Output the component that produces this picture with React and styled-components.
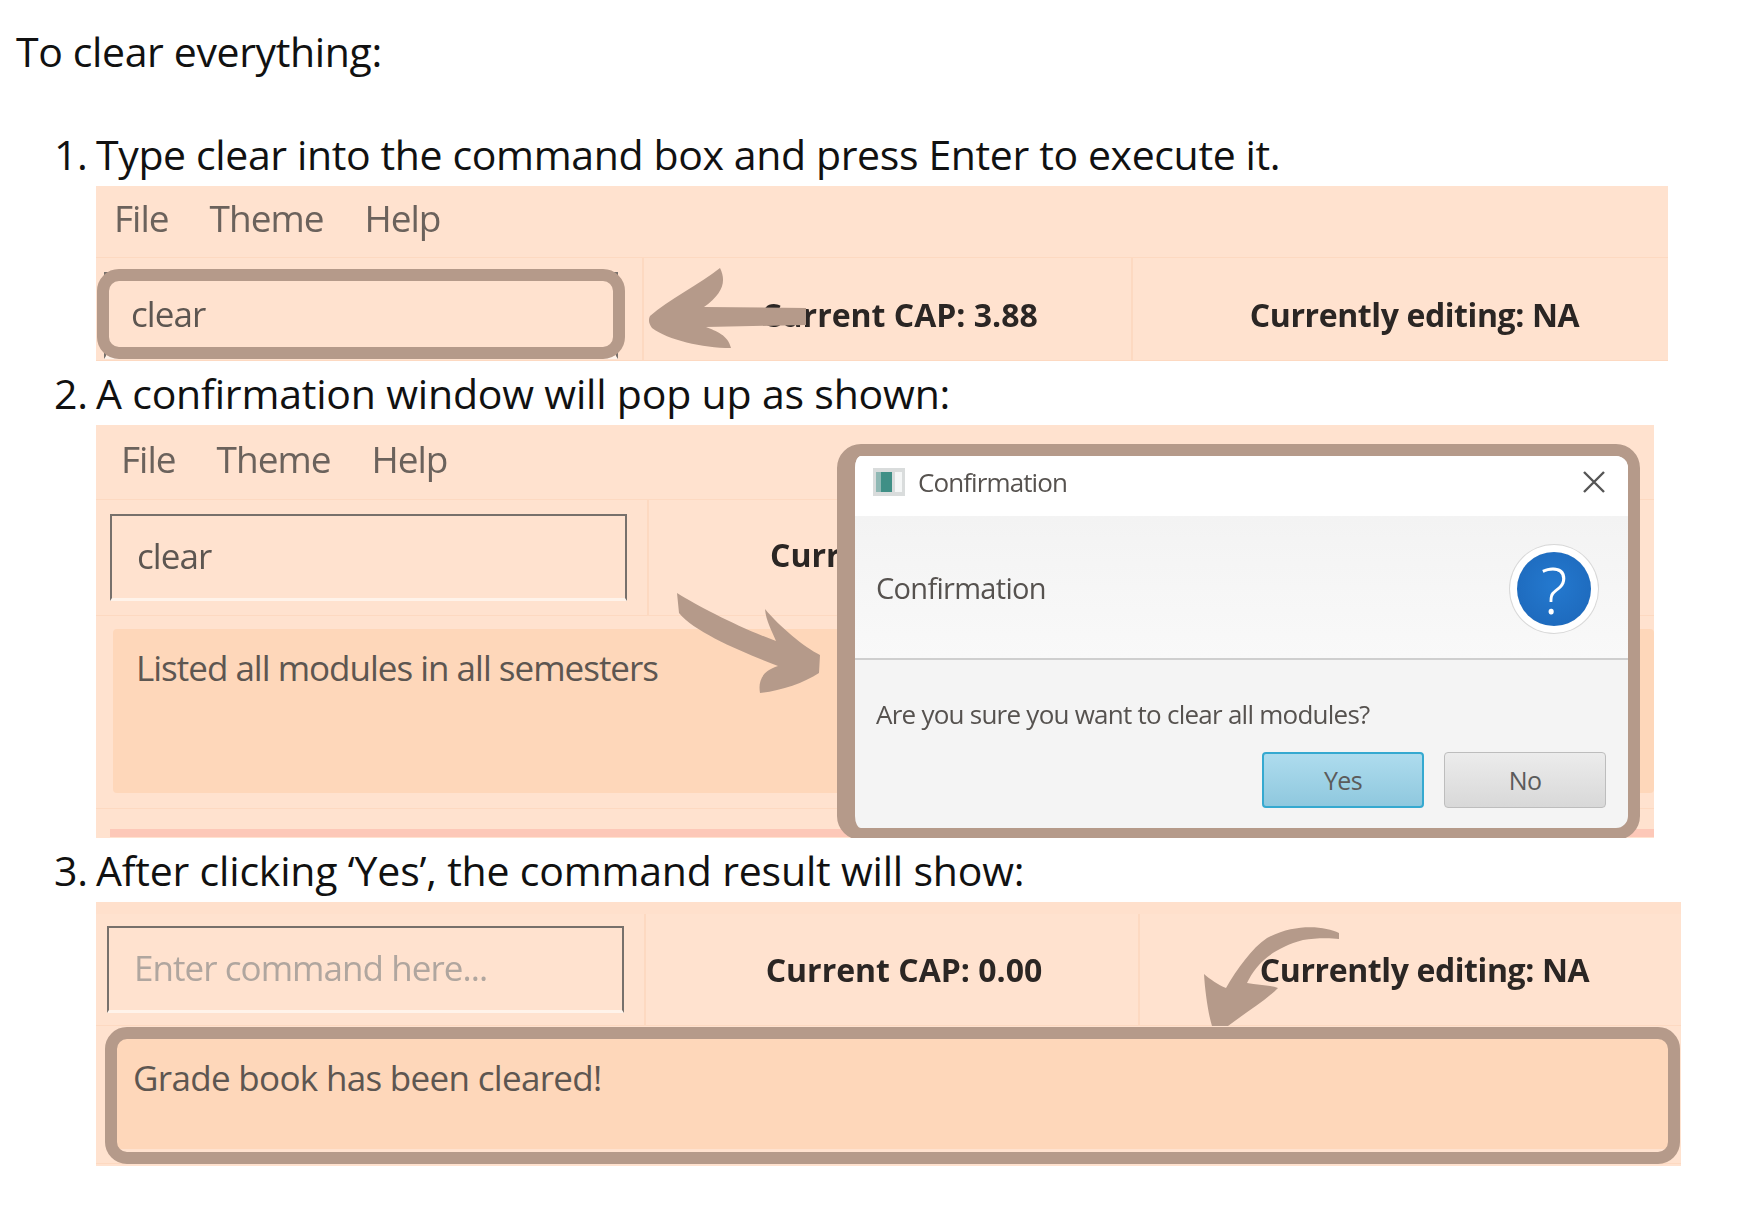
import styled, { createGlobalStyle } from "styled-components";

const GlobalStyle = createGlobalStyle`
  html, body {
    margin: 0;
    padding: 0;
    background: #fff;
  }
  #root {
    width: 1743px;
    height: 1205px;
    overflow: hidden;
  }
`;

const RING = "#b59a8a";

export default function App() {
  return (
    <Page>
      <GlobalStyle />
      <Heading>To clear everything:</Heading>
      <Steps>
        <Step>
          <StepLine>
            <Marker>1.</Marker>Type clear into the command box and press Enter to execute it.
          </StepLine>
          <Shot $width={1572} $height={175}>
            <Menu />
            <Toolbar $columns="548px 489px 1fr" $height={103}>
              <CommandCell $left={8} $top={14}>
                <CommandBox $width={514}>clear</CommandBox>
              </CommandCell>
              <CapCell $above={10}>Current CAP: 3.88</CapCell>
              <EditingCell $above={10}>Currently editing: NA</EditingCell>
            </Toolbar>
            <Ring $left={1} $top={83} $width={528} $height={90} />
            <ArrowLeft />
          </Shot>
        </Step>
        <Step>
          <StepLine $tracking={-0.19}>
            <Marker>2.</Marker>A confirmation window will pop up as shown:
          </StepLine>
          <Shot $width={1558} $height={413}>
            <Menu $left={25} $height={75} $lift={7} />
            <Toolbar $columns="553px 489px 1fr" $height={116}>
              <CommandCell $left={14} $top={14}>
                <CommandBox $width={517}>clear</CommandBox>
              </CommandCell>
              <CapCell $below={6} $start={121}>
                Curr
              </CapCell>
              <EditingCell />
            </Toolbar>
            <ResultArea $pad="13px 0 15px 17px">
              <ResultBox $height={164}>Listed all modules in all semesters</ResultBox>
            </ResultArea>
            <ListBand />
            <ArrowCurve />
            <Dialog>
              <TitleBar>
                <WindowIcon />
                <TitleText>Confirmation</TitleText>
                <CloseIcon />
              </TitleBar>
              <DialogHeader>
                <HeaderText>Confirmation</HeaderText>
                <HelpBadge>?</HelpBadge>
              </DialogHeader>
              <DialogBody>
                <Message>Are you sure you want to clear all modules?</Message>
                <ButtonRow>
                  <DialogButton $primary>Yes</DialogButton>
                  <DialogButton>No</DialogButton>
                </ButtonRow>
              </DialogBody>
            </Dialog>
          </Shot>
        </Step>
        <Step>
          <StepLine $tracking={-0.19}>
            <Marker>3.</Marker>After clicking ‘Yes’, the command result will show:
          </StepLine>
          <Shot $width={1585} $height={264}>
            <TopStrip />
            <Toolbar $columns="550px 494px 1fr" $height={112}>
              <CommandCell $left={11} $top={12}>
                <CommandBox $width={517} $placeholder>
                  Enter command here...
                </CommandBox>
              </CommandCell>
              <CapCell>Current CAP: 0.00</CapCell>
              <EditingCell>Currently editing: NA</EditingCell>
            </Toolbar>
            <ResultArea $pad="13px 12px 14px 20px">
              <ResultBox $height={110} $indent={17} $tracking={-0.68}>
                Grade book has been cleared!
              </ResultBox>
            </ResultArea>
            <Ring $left={9} $top={125} $width={1575} $height={137} />
            <ArrowDown />
          </Shot>
        </Step>
      </Steps>
    </Page>
  );
}

function Menu({ $left = 18, $height = 72, $lift = 9 }) {
  return (
    <MenuBar $left={$left} $height={$height} $lift={$lift}>
      <span>File</span>
      <span>Theme</span>
      <span>Help</span>
    </MenuBar>
  );
}

function ArrowLeft() {
  return (
    <Drawing $left={549} $top={76} width="165" height="92" viewBox="645 262 165 92">
      <path
        fill={RING}
        d="M650 316 C668 300 700 284 720 268 C727 282 722 294 704 307 L806 308 L806 325 L706 327 C716 331 728 335 731 348 C702 348 668 340 652 328 C649 324 648 320 650 316 Z"
      />
    </Drawing>
  );
}

function ArrowCurve() {
  return (
    <Drawing $left={574} $top={161} width="155" height="112" viewBox="670 585 155 112">
      <path
        fill={RING}
        d="M677 592 C700 606 738 626 776 640 C772 630 766 620 765 608 C780 626 804 646 820 654 L819 672 C804 682 780 690 760 692 C758 680 762 670 778 665 C745 652 695 632 679 612 Z"
      />
    </Drawing>
  );
}

function ArrowDown() {
  return (
    <Drawing $left={1104} $top={20} width="145" height="105" viewBox="1200 921 145 105">
      <path
        fill={RING}
        d="M1339 932 C1325 925 1295 922 1267 937 C1252 947 1237 968 1226 987 C1218 984 1210 978 1204 973 C1205 990 1208 1012 1212 1025 L1228 1025 C1245 1012 1265 1000 1278 987 C1270 984 1258 984 1247 982 C1255 965 1270 948 1303 939 C1315 937 1330 937 1339 938 Z"
      />
    </Drawing>
  );
}

function WindowIcon() {
  return (
    <svg width="32" height="28" viewBox="0 0 32 28">
      <rect x="0" y="0" width="32" height="28" fill="#d9dcdc" />
      <rect x="3" y="4" width="16" height="20" fill="#3f8f86" />
      <rect x="3" y="4" width="5" height="20" fill="#8fb8b4" />
      <rect x="22" y="4" width="7" height="20" fill="#f4f6f6" />
    </svg>
  );
}

function CloseIcon() {
  return (
    <CloseSvg width="24" height="24" viewBox="0 0 24 24">
      <path d="M2 2 L22 22 M22 2 L2 22" stroke="#555" strokeWidth="2.4" fill="none" />
    </CloseSvg>
  );
}

const Page = styled.div`
  width: 1743px;
  height: 1205px;
  padding-top: 19px;
  box-sizing: border-box;
  background: #fff;
  color: #111;
  font-family: "Open Sans", sans-serif;
`;

const Heading = styled.div`
  margin-left: 16px;
  height: 64px;
  font-size: 41px;
  line-height: 64px;
  letter-spacing: -0.37px;
`;

const Steps = styled.div`
  margin-top: 39px;
  display: flex;
  flex-direction: column;
`;

const Step = styled.div`
  display: flex;
  flex-direction: column;
`;

const StepLine = styled.div`
  height: 64px;
  padding-left: 54px;
  display: flex;
  font-size: 41px;
  line-height: 64px;
  letter-spacing: ${(p) => p.$tracking || -0.37}px;
  white-space: pre;
`;

const Marker = styled.span`
  width: 42px;
`;

const Shot = styled.div`
  position: relative;
  overflow: hidden;
  margin-left: 96px;
  width: ${(p) => p.$width}px;
  height: ${(p) => p.$height}px;
  background: #ffe2cf;
  font-family: "Open Sans", sans-serif;
`;

const MenuBar = styled.div`
  height: ${(p) => p.$height}px;
  padding: 0 0 ${(p) => p.$lift}px ${(p) => p.$left}px;
  box-sizing: border-box;
  border-bottom: 1px solid #fdd9c1;
  display: flex;
  align-items: center;
  gap: 41px;
  font-size: 37px;
  letter-spacing: -1px;
  color: #6b625c;
  filter: blur(0.7px);
`;

const TopStrip = styled.div`
  height: 12px;
  background: #ffe0cc;
`;

const Toolbar = styled.div`
  height: ${(p) => p.$height}px;
  display: grid;
  grid-template-columns: ${(p) => p.$columns};
  border-bottom: 1px solid #fdd9c1;
  box-sizing: border-box;
`;

const CommandCell = styled.div`
  padding: ${(p) => p.$top}px 0 0 ${(p) => p.$left}px;
  border-right: 2px solid #fdd9c1;
`;

const CommandBox = styled.div`
  width: ${(p) => p.$width}px;
  height: 87px;
  box-sizing: border-box;
  padding: 0 0 4px 25px;
  display: flex;
  align-items: center;
  border: 2px solid #77706b;
  border-bottom: 3px solid #fff3ea;
  font-size: 35px;
  letter-spacing: -0.95px;
  color: ${(p) => (p.$placeholder ? "#b0a69f" : "#5d5651")};
  filter: blur(0.6px);
`;

const CapCell = styled.div`
  padding: ${(p) => p.$above || 0}px 0 ${(p) => p.$below || 0}px ${(p) => p.$start || 24}px;
  display: flex;
  align-items: center;
  justify-content: ${(p) => (p.$start ? "flex-start" : "center")};
  border-right: 2px solid #fdd9c1;
  font-size: 32px;
  font-weight: 700;
  color: #2b2624;
  filter: blur(0.5px);
`;

const EditingCell = styled(CapCell)`
  padding-left: 28px;
  border-right: 0;
  letter-spacing: -0.4px;
`;

const ResultArea = styled.div`
  padding: ${(p) => p.$pad};
  border-bottom: 1px solid #fdd9c1;
`;

const ResultBox = styled.div`
  height: ${(p) => p.$height}px;
  box-sizing: border-box;
  padding: 15px 0 0 ${(p) => p.$indent || 23}px;
  background: #fed7ba;
  border-radius: 4px;
  font-size: 35px;
  line-height: 48px;
  letter-spacing: ${(p) => p.$tracking || -1}px;
  color: #5d5651;
`;

const ListBand = styled.div`
  height: 8px;
  margin: 20px 0 0 14px;
  background: #fdc8b8;
`;

const Ring = styled.div`
  position: absolute;
  left: ${(p) => p.$left}px;
  top: ${(p) => p.$top}px;
  width: ${(p) => p.$width}px;
  height: ${(p) => p.$height}px;
  box-sizing: border-box;
  border: 12px solid ${RING};
  border-radius: 22px;
`;

const Drawing = styled.svg`
  position: absolute;
  left: ${(p) => p.$left}px;
  top: ${(p) => p.$top}px;
`;

const Dialog = styled.div`
  position: absolute;
  left: 741px;
  top: 19px;
  width: 803px;
  height: 396px;
  box-sizing: border-box;
  border: 12px solid ${RING};
  border-left-width: 18px;
  border-radius: 24px;
  overflow: hidden;
  display: flex;
  flex-direction: column;
  background: #f4f4f4;
  color: #56524f;
`;

const TitleBar = styled.div`
  height: 60px;
  flex: none;
  box-sizing: border-box;
  padding: 0 22px 8px 18px;
  display: flex;
  align-items: center;
  gap: 13px;
  background: #fff;
`;

const TitleText = styled.span`
  flex: 1;
  font-size: 26px;
  letter-spacing: -0.9px;
  filter: blur(0.6px);
`;

const CloseSvg = styled.svg`
  flex: none;
`;

const DialogHeader = styled.div`
  height: 144px;
  flex: none;
  padding: 4px 37px 0 21px;
  box-sizing: border-box;
  display: flex;
  align-items: center;
  justify-content: space-between;
  border-bottom: 2px solid #cfcfcf;
  background: linear-gradient(#f3f3f3, #f9f9f9);
`;

const HeaderText = styled.span`
  margin-top: -4px;
  font-size: 29px;
  letter-spacing: -0.7px;
  filter: blur(0.6px);
`;

const HelpBadge = styled.div`
  width: 74px;
  height: 74px;
  box-sizing: border-box;
  border-radius: 50%;
  display: flex;
  align-items: center;
  justify-content: center;
  background: radial-gradient(circle at 50% 45%, #2479cf, #1c66b8);
  box-shadow: 0 0 0 7px #fff, 0 0 0 8px #d8d8d8;
  color: #fff;
  font-size: 64px;
  font-weight: 300;
  font-family: "Open Sans", sans-serif;
  filter: blur(0.5px);
`;

const DialogBody = styled.div`
  flex: 1;
  padding: 36px 22px 0 21px;
  display: flex;
  flex-direction: column;
`;

const Message = styled.div`
  font-size: 26px;
  line-height: 36px;
  letter-spacing: -0.75px;
  filter: blur(0.6px);
`;

const ButtonRow = styled.div`
  margin-top: 20px;
  display: flex;
  justify-content: flex-end;
  gap: 20px;
`;

const DialogButton = styled.div`
  width: 162px;
  height: 56px;
  box-sizing: border-box;
  border-radius: 4px;
  display: flex;
  align-items: center;
  justify-content: center;
  font-size: 25px;
  letter-spacing: -0.6px;
  border: ${(p) => (p.$primary ? "2px solid #35a9d0" : "1px solid #bdbdbd")};
  background: ${(p) =>
    p.$primary
      ? "linear-gradient(#aedcee, #8fc8de)"
      : "linear-gradient(#ececec, #d8d8d8)"};
  color: #5b5b5b;
`;
